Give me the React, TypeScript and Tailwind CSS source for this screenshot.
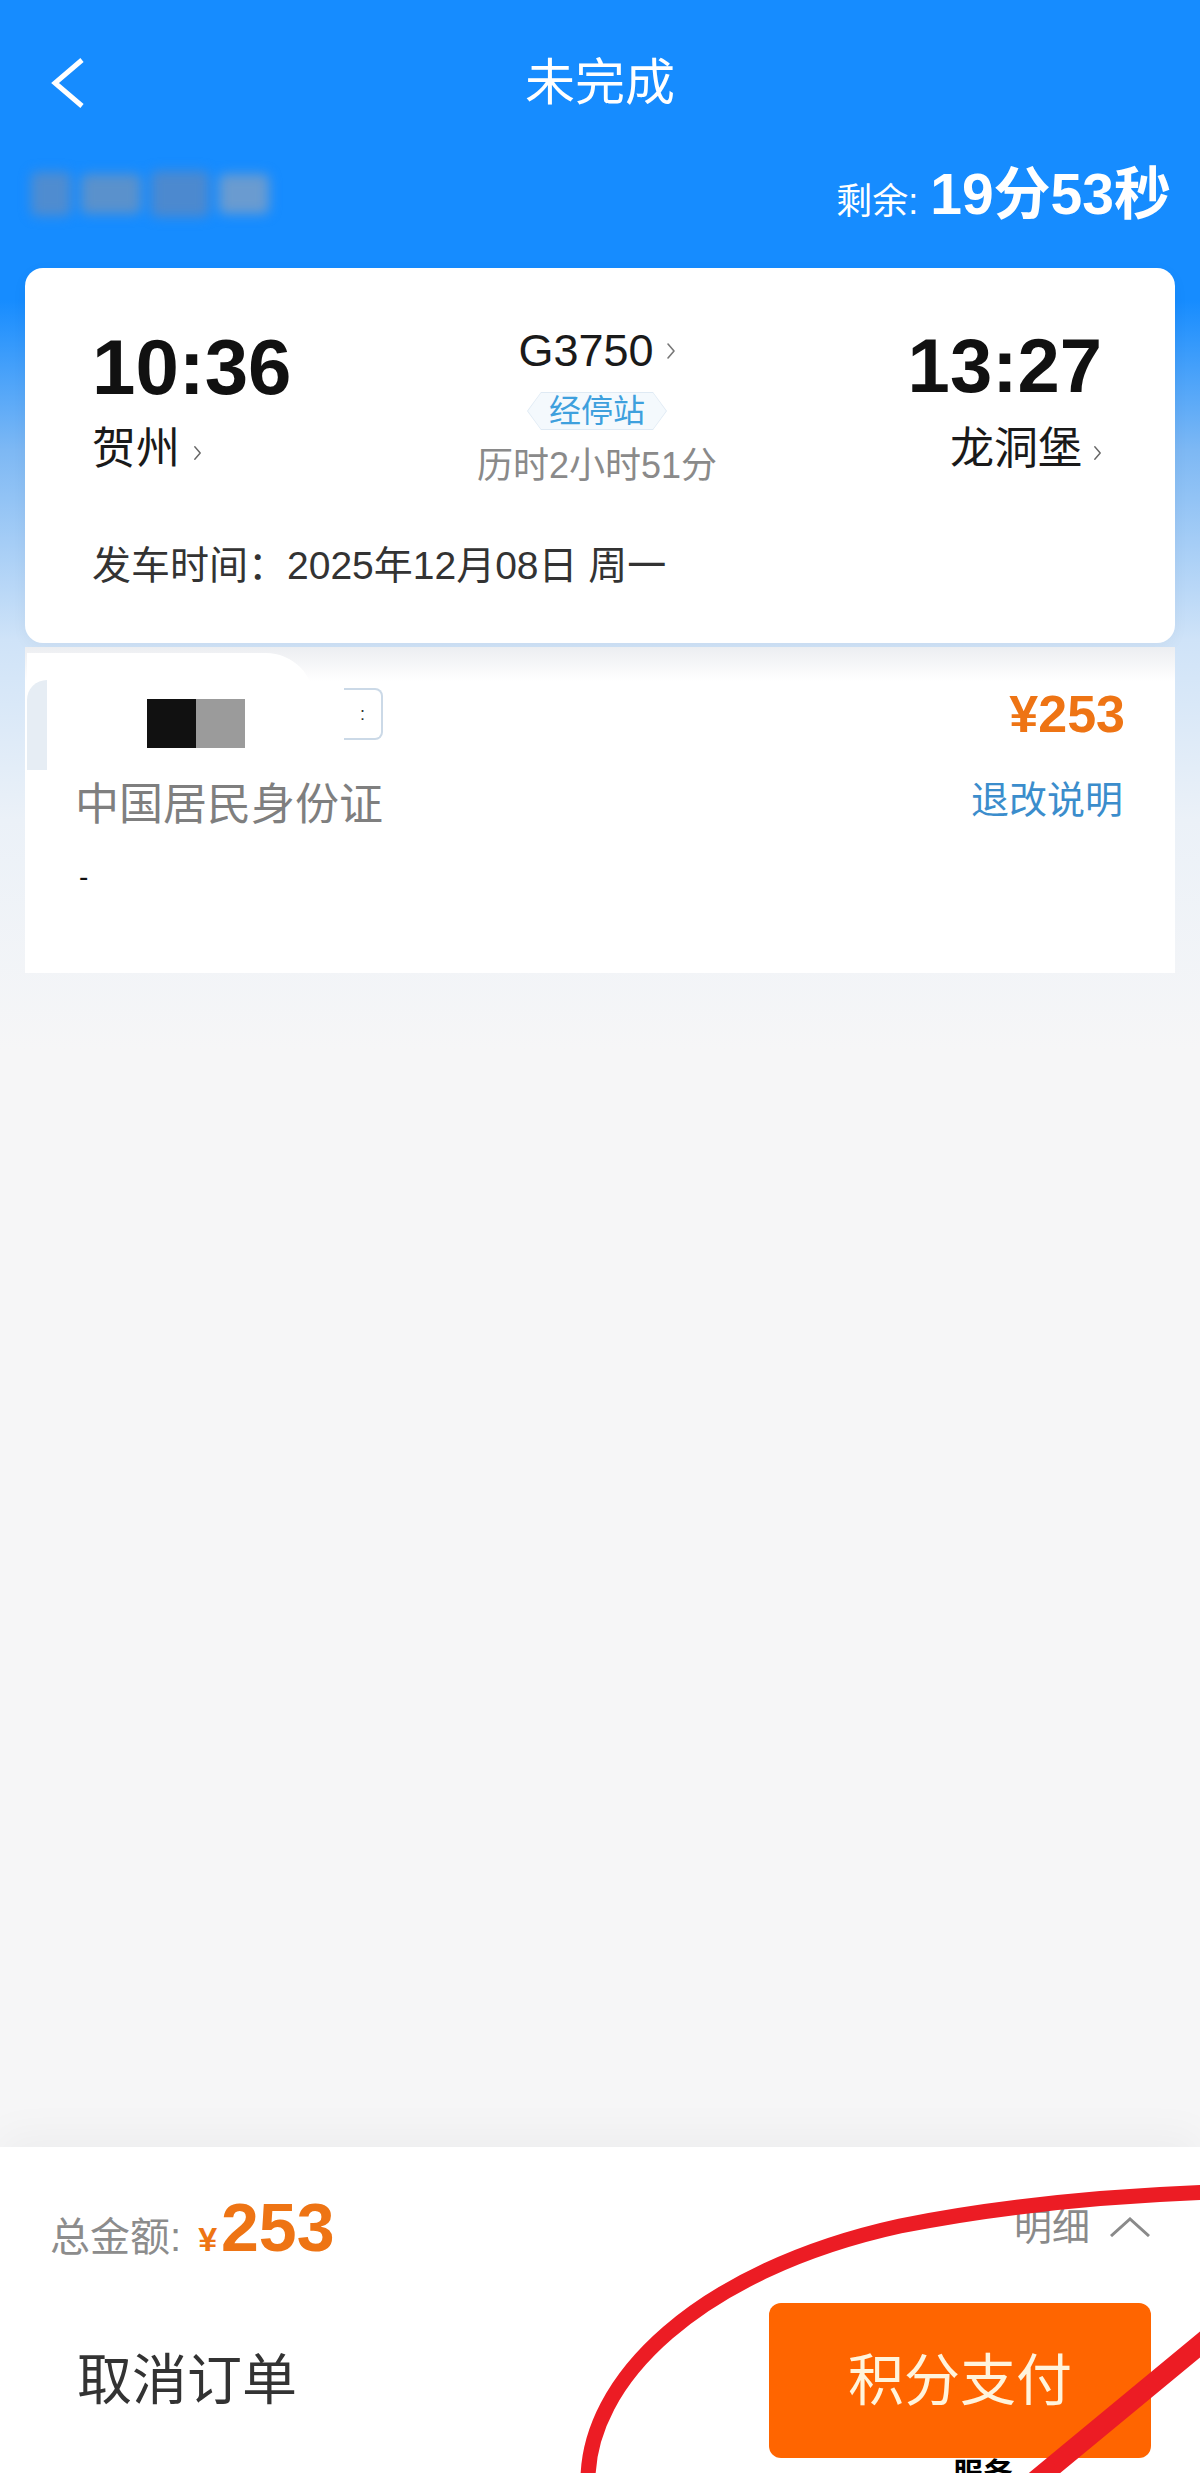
const Chevron = ({ className = '' }: { className?: string }) => (
  <svg
    viewBox="0 0 10 18"
    className={className}
    fill="none"
    stroke="currentColor"
    strokeWidth={1.6}
    strokeLinecap="round"
    strokeLinejoin="round"
  >
    <path d="M2 2l6 7-6 7" />
  </svg>
)

const StopsBadge = () => (
  <div className="flex h-[38px] w-[140px] bg-[#dfeaf4] [clip-path:polygon(14px_0,calc(100%_-_14px)_0,100%_50%,calc(100%_-_14px)_100%,14px_100%,0_50%)]">
    <div className="m-[1px] flex flex-1 items-center justify-center bg-[#f4f9fd] text-[32px] leading-none text-[#3ea0dd] [clip-path:polygon(13px_0,calc(100%_-_13px)_0,100%_50%,calc(100%_-_13px)_100%,13px_100%,0_50%)]">
      经停站
    </div>
  </div>
)

export default function App() {
  return (
    <div className="relative flex h-[2473px] w-[1200px] flex-col overflow-hidden bg-[#f6f6f7] bg-[linear-gradient(180deg,#168cff_0px,#168cff_300px,#7db8f4_450px,#cfe3f8_640px,#ebf1f8_820px,#f6f6f7_1050px)] font-['Liberation_Sans','Noto_Sans_CJK_SC',sans-serif]">
      {/* nav */}
      <div className="grid h-[166px] shrink-0 grid-cols-[200px_1fr_200px] items-center">
        <div className="pl-[50px]">
          <svg viewBox="0 0 36 52" className="h-[52px] w-[36px]" fill="none" stroke="#fff" strokeWidth={5}>
            <path d="M32 3L5 26l27 23" />
          </svg>
        </div>
        <div className="text-center text-[50px] leading-none text-white">未完成</div>
        <div />
      </div>

      <div className="flex h-[56px] shrink-0 items-center justify-between pl-[23px] pr-[29px]">
        {/* blurred passenger name */}
        <div className="flex h-[66px] w-[252px] items-center gap-[10px] pl-[8px] blur-[6px]">
          <div className="h-[44px] w-[40px] rounded-[6px] bg-[#4f8cd0]" />
          <div className="h-[40px] w-[60px] rounded-[6px] bg-[#5a91cc]" />
          <div className="h-[46px] w-[58px] rounded-[6px] bg-[#4c89cf]" />
          <div className="h-[40px] w-[50px] rounded-[6px] bg-[#6a9bd0]" />
        </div>
        <div className="flex items-baseline text-white">
          <span className="text-[36px] leading-none">剩余:</span>
          <span className="ml-[12px] text-[57px] font-bold leading-none">19分53秒</span>
        </div>
      </div>

      {/* train card */}
      <div className="mx-[25px] mt-[46px] h-[375px] shrink-0 rounded-[18px] bg-white pl-[67px] pr-[73px] pt-[60px] shadow-[0_4px_16px_rgba(0,0,0,0.04)]">
        <div className="grid h-[218px] grid-cols-[1fr_auto_1fr]">
          <div className="flex flex-col items-start">
            <div className="text-[78px] font-bold leading-none text-[#111]">10:36</div>
            <div className="mt-[21px] flex items-center text-[44px] leading-none text-[#1a1a1a]">
              贺州
              <Chevron className="ml-[13px] mt-[8px] h-[18px] w-[9px] text-[#666]" />
            </div>
          </div>
          <div className="flex flex-col items-center">
            <div className="flex items-center text-[45px] leading-none text-[#1a1a1a]">
              G3750
              <Chevron className="ml-[12px] h-[18px] w-[10px] text-[#777]" />
            </div>
            <div className="mt-[19px]">
              <StopsBadge />
            </div>
            <div className="mt-[18px] text-[36px] leading-none text-[#8a8a8a]">历时2小时51分</div>
          </div>
          <div className="flex flex-col items-end">
            <div className="text-[76px] font-bold leading-none text-[#111]">13:27</div>
            <div className="mt-[23px] flex items-center text-[44px] leading-none text-[#1a1a1a]">
              龙洞堡
              <Chevron className="ml-[11px] mt-[8px] h-[18px] w-[9px] text-[#666]" />
            </div>
          </div>
        </div>
        <div className="text-[39px] leading-none text-[#333]">发车时间：2025年12月08日 周一</div>
      </div>

      {/* passenger card */}
      <div className="mx-[25px] mt-[4px] h-[326px] shrink-0 bg-[linear-gradient(180deg,#eceef1_0px,#ffffff_34px)] pt-[6px]">
        <div className="flex h-[120px] justify-between">
          <div className="flex">
            <div className="ml-[2px] flex h-[120px] w-[287px] rounded-tr-[48px] bg-white">
              <div className="mt-[27px] h-[90px] w-[20px] rounded-tl-[20px] bg-[#e6edf4]" />
              <div className="ml-[100px] mt-[46px] flex h-[49px]">
                <div className="w-[49px] bg-[#111]" />
                <div className="w-[49px] bg-[#9b9b9b]" />
              </div>
            </div>
            <div className="ml-[30px] mt-[35px] flex h-[52px] w-[39px] items-center justify-center rounded-r-[8px] border-y-2 border-r-2 border-[#cbd9e7] text-[18px] leading-none text-[#333]">
              :
            </div>
          </div>
          <div className="mr-[50px] mt-[35px] text-[52px] font-bold leading-none text-[#ee7414]">¥253</div>
        </div>
        <div className="mt-[10px] flex items-start justify-between pl-[50px] pr-[52px]">
          <div className="text-[44px] leading-none text-[#7f7f7f]">中国居民身份证</div>
          <div className="-mt-[2px] text-[38px] leading-none text-[#3b8dcc]">退改说明</div>
        </div>
        <div className="mt-[36px] pl-[54px] text-[28px] leading-none text-[#111]">-</div>
      </div>

      <div className="flex-1" />

      {/* bottom bar */}
      <div className="h-[326px] shrink-0 overflow-hidden bg-white pl-[50px] pr-[49px] pt-[46px] shadow-[0_-12px_40px_rgba(0,0,0,0.04)]">
        <div className="flex h-[68px] items-center justify-between">
          <div className="flex items-baseline">
            <span className="text-[40px] leading-none text-[#8c8c8c]">总金额:</span>
            <span className="ml-[17px] text-[34px] font-bold leading-none text-[#ee7414]">¥</span>
            <span className="ml-[4px] text-[68px] font-bold leading-none text-[#ee7414]">253</span>
          </div>
          <div className="flex items-center">
            <span className="text-[38px] leading-none text-[#8a8a8a]">明细</span>
            <svg viewBox="0 0 42 20" className="ml-[19px] h-[20px] w-[42px]" fill="none" stroke="#8a8a8a" strokeWidth={3}>
              <path d="M2 19L21 2l19 17" />
            </svg>
          </div>
        </div>
        <div className="mt-[42px] flex items-start justify-between">
          <div className="ml-[27px] flex h-[155px] items-center text-[55px] leading-none text-[#333]">取消订单</div>
          <div className="flex flex-col items-center">
            <div className="flex h-[155px] w-[382px] items-center justify-center rounded-[12px] bg-[#ff6500] text-[56px] leading-none text-[#fff4dc]">
              积分支付
            </div>
            <div className="ml-[46px] mt-[1px] text-[30px] font-bold leading-none text-black">服务</div>
          </div>
        </div>
      </div>

      {/* red hand-drawn annotation over the pay button */}
      <svg
        viewBox="0 0 1200 333"
        className="pointer-events-none absolute left-0 top-[2140px] h-[333px] w-[1200px]"
        fill="none"
        stroke="#ec1c24"
        strokeLinecap="round"
      >
        <path d="M588 345C585 240 700 130 900 86C1000 66 1100 56 1215 52" strokeWidth={15} />
        <path d="M1030 345L1215 192" strokeWidth={20} />
      </svg>
    </div>
  )
}
